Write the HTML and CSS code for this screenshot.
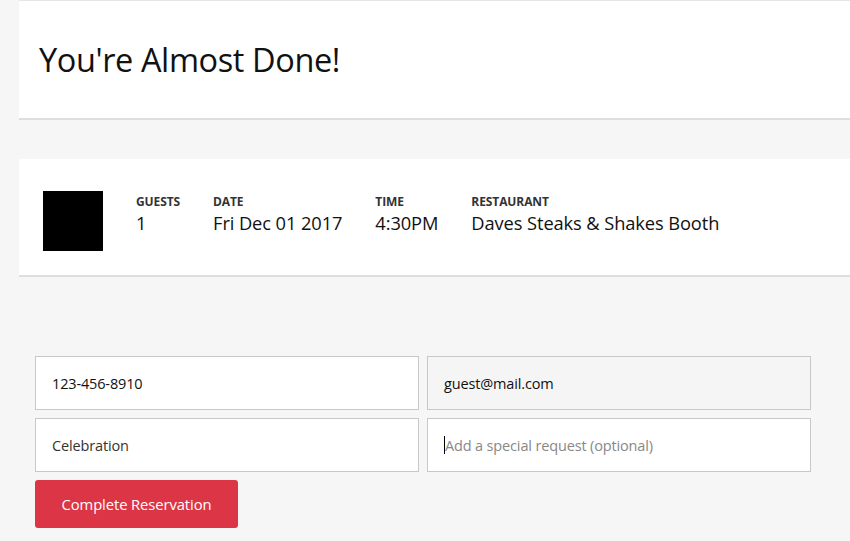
FILE: index.html
```html
<!DOCTYPE html>
<html>
<head>
<meta charset="utf-8">
<link rel="stylesheet" href="styles.css">
</head>
<body>
<div class="page">
  <header class="card header">
    <h1 class="title">You're Almost Done!</h1>
  </header>
  <section class="card summary">
    <div class="thumb"></div>
    <div class="info">
      <div class="label">GUESTS</div>
      <div class="value">1</div>
    </div>
    <div class="info">
      <div class="label">DATE</div>
      <div class="value">Fri Dec 01 2017</div>
    </div>
    <div class="info">
      <div class="label">TIME</div>
      <div class="value">4:30PM</div>
    </div>
    <div class="info">
      <div class="label">RESTAURANT</div>
      <div class="value">Daves Steaks &amp; Shakes Booth</div>
    </div>
  </section>
  <form class="form">
    <div class="grid">
      <div class="field">123-456-8910</div>
      <div class="field readonly">guest@mail.com</div>
      <div class="field muted">Celebration</div>
      <div class="field placeholder"><span class="caret"></span>Add a special request (optional)</div>
    </div>
    <button type="button" class="btn">Complete Reservation</button>
  </form>
</div>
</body>
</html>
```
FILE: styles.css
```css
* { box-sizing: border-box; }
html, body { margin: 0; padding: 0; }
body {
  background: #f6f6f6;
  font-family: "Open Sans", "Noto Sans", sans-serif;
  color: #111;
  width: 850px;
  height: 541px;
  overflow: hidden;
}
.page { padding-left: 19px; }
.card {
  background: #fff;
  border-bottom: 2px solid #dedede;
}
.header {
  border-top: 1px solid #e6e6e6;
  height: 120px;
  padding: 35px 20px 0;
}
.title {
  margin: 0;
  font-weight: 400;
  font-size: 32.5px;
  line-height: 48px;
  letter-spacing: -0.4px;
}
.summary {
  margin-top: 39px;
  height: 118px;
  padding: 32px 24px 0;
  display: flex;
  align-items: flex-start;
  gap: 33px;
}
.thumb { width: 60px; height: 60px; background: #000; flex: none; }
.info { padding-top: 3px; }
.label {
  font-size: 12px;
  font-weight: 700;
  color: #333;
  line-height: 16px;
  letter-spacing: -0.1px;
}
.value {
  font-size: 18.3px;
  line-height: 26px;
  color: #111;
  letter-spacing: -0.1px;
}
.form { padding: 79px 0 0 16px; }
.grid {
  display: grid;
  grid-template-columns: 384px 384px;
  column-gap: 8px;
  row-gap: 8px;
}
.field {
  height: 54px;
  border: 1px solid #c8c8c8;
  background: #fff;
  padding: 0 16px;
  display: flex;
  align-items: center;
  font-size: 14.5px;
  color: #111;
  letter-spacing: -0.15px;
}
.field.readonly { background: #f5f5f5; }
.field.muted { color: #333; }
.field.placeholder { color: #888; }
.caret { width: 1px; height: 18px; background: #000; }
.btn {
  margin-top: 8px;
  width: 203px;
  height: 48px;
  border: none;
  border-radius: 3px;
  background: #dc3545;
  color: #fff;
  font-family: inherit;
  font-size: 14.8px;
  letter-spacing: -0.1px;
  cursor: pointer;
}
```
